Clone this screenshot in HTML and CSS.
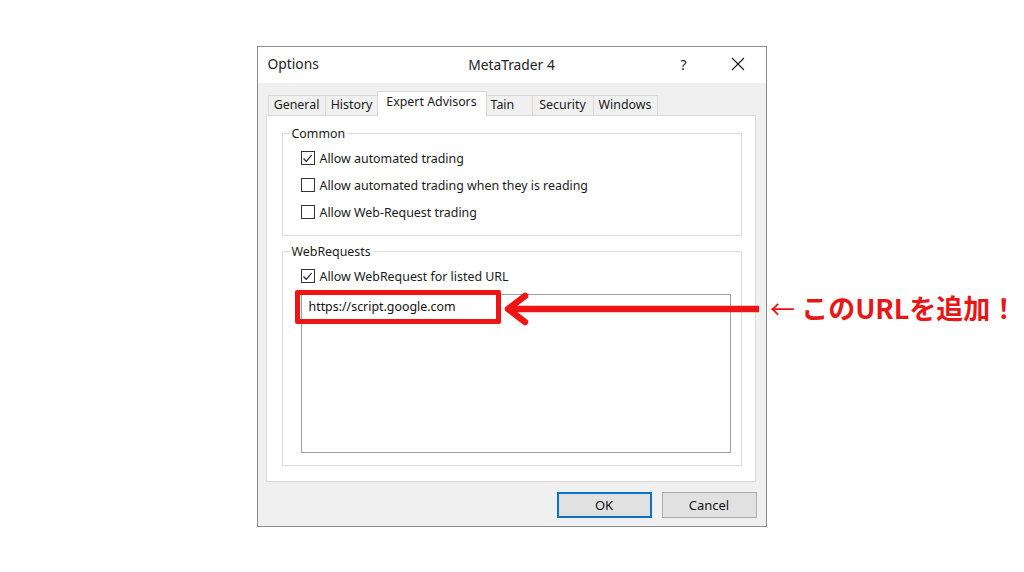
FILE: index.html
```html
<!DOCTYPE html>
<html lang="ja">
<head>
<meta charset="utf-8">
<title>Options</title>
<link rel="stylesheet" href="styles.css">
</head>
<body>
<div class="stage">
  <div class="dialog">
    <div class="titlebar">
      <span class="t-left">Options</span>
      <span class="t-center">MetaTrader 4</span>
      <span class="t-help">?</span>
      <span class="t-close"><svg width="14" height="14" viewBox="0 0 14 14"><path d="M1 1L13 13M13 1L1 13" stroke="#222" stroke-width="1.2" fill="none"/></svg></span>
    </div>
    <div class="tabs">
      <div class="tab w-general">General</div>
      <div class="tab w-history">History</div>
      <div class="tab active">Expert Advisors</div>
      <div class="tab w-tain">Tain</div>
      <div class="tab w-security">Security</div>
      <div class="tab w-windows">Windows</div>
    </div>
    <div class="panel">
      <fieldset class="group g-common">
        <legend>Common</legend>
        <div class="check"><span class="box checked"><svg width="11" height="11" viewBox="0 0 11 11"><path d="M1.5 5.5L4.2 8.3L9.6 2.2" stroke="#222" stroke-width="1.2" fill="none"/></svg></span>Allow automated trading</div>
        <div class="check"><span class="box"></span>Allow automated trading when they is reading</div>
        <div class="check"><span class="box"></span>Allow Web-Request trading</div>
      </fieldset>
      <fieldset class="group g-web">
        <legend>WebRequests</legend>
        <div class="check"><span class="box checked"><svg width="11" height="11" viewBox="0 0 11 11"><path d="M1.5 5.5L4.2 8.3L9.6 2.2" stroke="#222" stroke-width="1.2" fill="none"/></svg></span>Allow WebRequest for listed URL</div>
        <div class="listbox">
          <div class="url">https://script.google.com</div>
        </div>
      </fieldset>
    </div>
    <div class="buttons">
      <button class="btn default">OK</button>
      <button class="btn">Cancel</button>
    </div>
  </div>

  <div class="highlight"></div>
  <svg class="arrow" width="262" height="36" viewBox="0 0 262 36">
    <path d="M6 18H258" stroke="#f01414" stroke-width="6.5" fill="none"/>
    <path d="M24 5L7 18L24 31" stroke="#f01414" stroke-width="6.5" fill="none" stroke-linecap="round" stroke-linejoin="round"/>
  </svg>
  <div class="note"><span class="note-arrow">←</span> このURLを追加！</div>
</div>
</body>
</html>
```

FILE: styles.css
```css
* { box-sizing: border-box; }
html, body { margin: 0; padding: 0; background: #fff; }
body {
  font-family: "Noto Sans", "Liberation Sans", sans-serif;
  color: #1a1a1a;
}
.stage {
  position: relative;
  width: 1024px;
  height: 572px;
  display: flex;
  align-items: center;
  justify-content: center;
}
.dialog {
  width: 510px;
  height: 481px;
  margin-right: 1px;
  border: 1px solid #8c8c8c;
  background: #f0f0f0;
  display: flex;
  flex-direction: column;
}
.titlebar {
  height: 36px;
  background: #fff;
  display: flex;
  align-items: center;
  position: relative;
  font-size: 13.8px;
  color: #222;
  padding-bottom: 3px;
}
.t-left { padding-left: 10px; }
.t-center { position: absolute; left: 0; right: 0; top: 8px; text-align: center; }
.t-help { position: absolute; left: 423px; top: 8px; font-size: 14px; }
.t-close { position: absolute; left: 473px; top: 10px; display: flex; }
.tabs {
  display: flex;
  align-items: flex-end;
  height: 32px;
  padding-left: 10px;
  font-size: 12.4px;
}
.tab {
  height: 20px;
  border: 1px solid #d9d9d9;
  border-bottom: none;
  margin-left: -1px;
  background: #f0f0f0;
  line-height: 18px;
  text-align: center;
  color: #1a1a1a;
}
.w-general { width: 58px; margin-left: 0; }
.w-history { width: 54px; }
.w-tain { width: 48px; text-align: left; padding-left: 5px; }
.w-security { width: 62px; }
.w-windows { width: 65px; }
.tab.active {
  width: 110px;
  background: #fff;
  margin: 0 -1px -1px -2px;
  position: relative;
  z-index: 1;
  line-height: 20px;
  height: 25px;
}
.panel {
  margin: 0 10px 0 8px;
  height: 367px;
  background: #fff;
  border: 1px solid #d9d9d9;
  padding: 10px 13px 0 15px;
}
.group {
  margin: 0;
  border: 1px solid #dcdcdc;
  padding: 0 0 0 18px;
  font-size: 12.4px;
}
.group legend {
  padding: 0 2px;
  margin-left: -11px;
  color: #1a1a1a;
  line-height: 15px;
}
.g-common { height: 110px; padding-top: 4px; }
.g-web { height: 222px; margin-top: 8px; padding-top: 4px; }
.check {
  display: flex;
  align-items: center;
  height: 27px;
  color: #1a1a1a;
}
.box {
  width: 14px;
  height: 14px;
  border: 1px solid #333;
  background: #fff;
  margin-right: 5px;
  display: flex;
  align-items: center;
  justify-content: center;
}
.listbox {
  margin-top: 4px;
  width: 430px;
  height: 159px;
  border: 1px solid #a0a0a0;
  background: #fff;
}
.url {
  padding: 3px 0 0 7px;
  font-size: 12.4px;
  color: #111;
}
.buttons {
  display: flex;
  justify-content: flex-end;
  gap: 10px;
  padding: 10px 9px 0 0;
}
.btn {
  width: 95px;
  height: 26px;
  font-family: inherit;
  font-size: 13px;
  color: #111;
  background: #e1e1e1;
  border: 1px solid #adadad;
  padding: 0;
}
.btn.default { border: 2px solid #0a72c9; }

.highlight {
  position: absolute;
  left: 295px;
  top: 290px;
  width: 206px;
  height: 34px;
  border: 5px solid #f01414;
  border-radius: 2px;
}
.arrow {
  position: absolute;
  left: 501px;
  top: 291px;
}
.note {
  position: absolute;
  left: 770px;
  top: 290px;
  font-family: "Noto Sans CJK JP", "Noto Sans", sans-serif;
  font-weight: 700;
  font-size: 27px;
  line-height: 36px;
  color: #e81616;
  white-space: nowrap;
}
.note-arrow { font-weight: 400; font-size: 25px; }
```
